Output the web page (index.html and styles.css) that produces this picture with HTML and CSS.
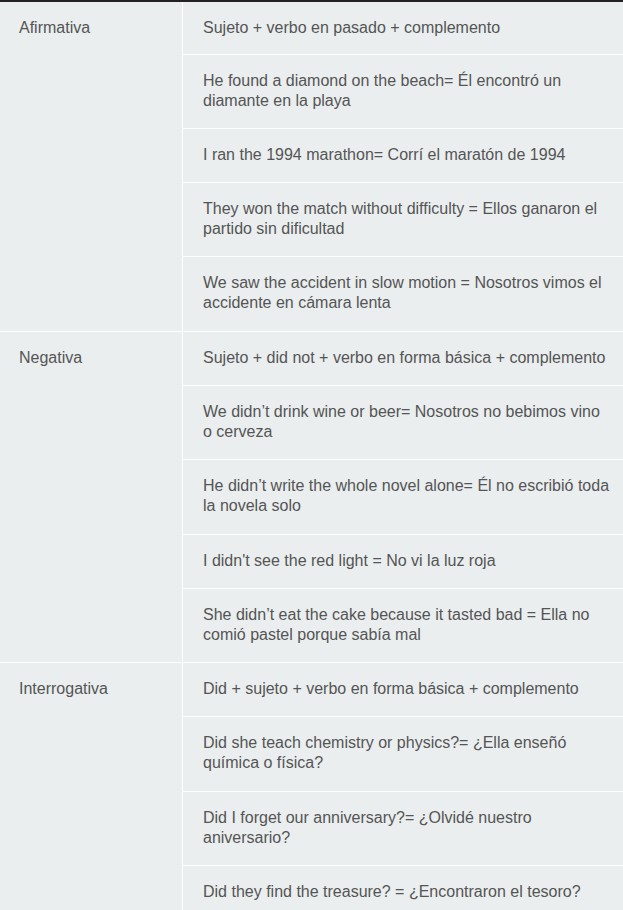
FILE: index.html
```html
<!DOCTYPE html>
<html lang="es">
<head>
<meta charset="utf-8">
<link rel="stylesheet" href="styles.css">
</head>
<body>
<table class="grammar">
  <tbody>
    <tr class="first">
      <td class="kind" rowspan="5">Afirmativa</td>
      <td class="ex">Sujeto + verbo en pasado + complemento</td>
    </tr>
    <tr><td class="ex">He found a diamond on the beach= Él encontró un diamante en la playa</td></tr>
    <tr><td class="ex">I ran the 1994 marathon= Corrí el maratón de 1994</td></tr>
    <tr><td class="ex">They won the match without difficulty = Ellos ganaron el partido sin dificultad</td></tr>
    <tr><td class="ex">We saw the accident in slow motion = Nosotros vimos el accidente en cámara lenta</td></tr>
    <tr>
      <td class="kind" rowspan="5">Negativa</td>
      <td class="ex">Sujeto + did not + verbo en forma básica + complemento</td>
    </tr>
    <tr><td class="ex">We didn’t drink wine or beer= Nosotros no bebimos vino <span class="nw">o cerveza</span></td></tr>
    <tr><td class="ex">He didn’t write the whole novel alone= Él no escribió toda la novela solo</td></tr>
    <tr><td class="ex">I didn't see the red light = No vi la luz roja</td></tr>
    <tr><td class="ex">She didn’t eat the cake because it tasted bad = Ella no comió pastel porque sabía mal</td></tr>
    <tr>
      <td class="kind" rowspan="4">Interrogativa</td>
      <td class="ex">Did + sujeto + verbo en forma básica + complemento</td>
    </tr>
    <tr><td class="ex">Did she teach chemistry or physics?= ¿Ella enseñó química o física?</td></tr>
    <tr><td class="ex">Did I forget our anniversary?= ¿Olvidé nuestro aniversario?</td></tr>
    <tr><td class="ex">Did they find the treasure? = ¿Encontraron el tesoro?</td></tr>
  </tbody>
</table>
</body>
</html>
```
FILE: styles.css
```css
html, body {
  margin: 0;
  padding: 0;
  background: #eaeeef;
}
.grammar {
  width: 623px;
  border-collapse: collapse;
  border-top: 2px solid #222222;
  background: #eaeeef;
  font-family: "Liberation Sans", Arial, sans-serif;
  font-size: 16px;
  line-height: 20px;
  color: #555555;
}
.grammar td {
  border: 1px solid #ffffff;
  vertical-align: top;
  text-align: left;
}
.grammar tr:first-child td {
  border-top: none;
}
.kind {
  width: 145px;
  padding: 16px 18px 17.3px 19px;
  border-left: none !important;
}
.ex {
  padding: 16px 9px 17.3px 20px;
  border-right: none !important;
}
.first .ex {
  padding-bottom: 15.5px;
}
.nw {
  white-space: nowrap;
}
```
